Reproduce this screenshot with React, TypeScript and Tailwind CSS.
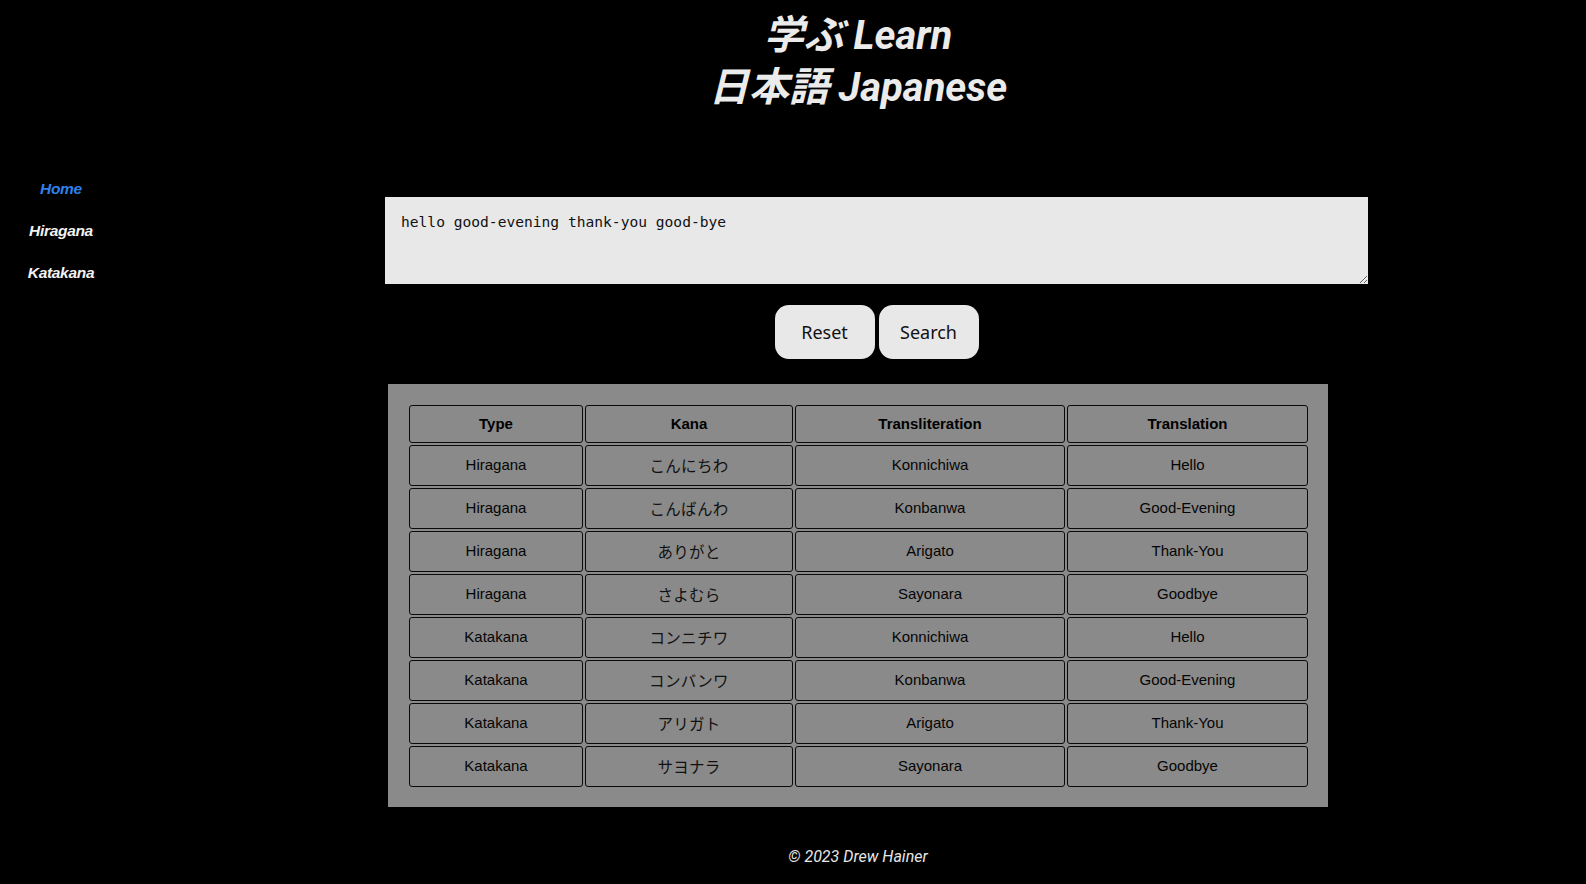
import React from 'react'

const ROWS = [
  { type: 'Hiragana', kana: 'こんにちわ', translit: 'Konnichiwa', translation: 'Hello' },
  { type: 'Hiragana', kana: 'こんばんわ', translit: 'Konbanwa', translation: 'Good-Evening' },
  { type: 'Hiragana', kana: 'ありがと', translit: 'Arigato', translation: 'Thank-You' },
  { type: 'Hiragana', kana: 'さよむら', translit: 'Sayonara', translation: 'Goodbye' },
  { type: 'Katakana', kana: 'コンニチワ', translit: 'Konnichiwa', translation: 'Hello' },
  { type: 'Katakana', kana: 'コンバンワ', translit: 'Konbanwa', translation: 'Good-Evening' },
  { type: 'Katakana', kana: 'アリガト', translit: 'Arigato', translation: 'Thank-You' },
  { type: 'Katakana', kana: 'サヨナラ', translit: 'Sayonara', translation: 'Goodbye' },
]

const NAV = ['Home', 'Hiragana', 'Katakana']

function Sidebar() {
  return (
    <aside className="w-[122px] shrink-0 pt-[168px]">
      <nav className="flex flex-col">
        {NAV.map((item, i) => (
          <a
            key={item}
            href="#"
            className={
              'flex h-[42px] items-center justify-center text-[15.5px] font-bold italic tracking-[-0.02em] ' +
              (i === 0 ? 'text-[#2f80ed]' : 'text-[#f2f2f2]')
            }
            style={{ fontFamily: '"Liberation Sans", Arial, sans-serif' }}
          >
            {item}
          </a>
        ))}
      </nav>
    </aside>
  )
}

function SearchForm() {
  return (
    <div className="flex w-full flex-col items-center pl-[37px]">
      <textarea
        className="h-[87px] w-[983px] border-0 bg-[#e8e8e8] px-[16px] pt-[16px] text-[14.6px] leading-[18px] text-[#111] outline-none"
        style={{ fontFamily: '"DejaVu Sans Mono", monospace' }}
        defaultValue="hello good-evening thank-you good-bye"
      />
      <div className="mt-[21px] flex gap-[4px]">
        {['Reset', 'Search'].map((label) => (
          <button
            key={label}
            className="h-[54px] w-[100px] rounded-[14px] bg-[#e8e8e8] text-[18px] text-[#111]"
            style={{ fontFamily: '"Noto Sans", sans-serif' }}
          >
            {label}
          </button>
        ))}
      </div>
    </div>
  )
}

function KanaTable() {
  const cell = 'rounded-[3px] border border-[#0a0a0a] p-0 text-center align-middle'
  return (
    <div className="mt-[25px] w-[940px] bg-[#8a8a8a] px-[19px] pt-[19px] pb-[18px]">
      <table
        className="w-[902px] table-fixed border-separate border-spacing-[2px]"
        style={{ fontFamily: '"Liberation Sans", Arial, sans-serif' }}
      >
        <thead>
          <tr className="h-[38px] text-[15px] font-bold text-black">
            <th className={cell + ' w-[174px]'}>Type</th>
            <th className={cell + ' w-[208px]'}>Kana</th>
            <th className={cell + ' w-[270px]'}>Transliteration</th>
            <th className={cell + ' w-[241px]'}>Translation</th>
          </tr>
        </thead>
        <tbody className="text-[15px] text-[#050505]">
          {ROWS.map((r, i) => (
            <tr key={i} className="h-[41px]">
              <td className={cell}>{r.type}</td>
              <td
                className={cell + ' text-[15.5px] tracking-[0.02em] text-[#111]'}
                style={{ fontFamily: '"Noto Sans CJK JP", sans-serif' }}
              >
                {r.kana}
              </td>
              <td className={cell}>{r.translit}</td>
              <td className={cell}>{r.translation}</td>
            </tr>
          ))}
        </tbody>
      </table>
    </div>
  )
}

export default function App() {
  return (
    <div className="flex min-h-[884px] w-full bg-black">
      <Sidebar />
      <main className="flex flex-1 flex-col items-center pl-[8px]">
        <h1
          className="mt-[10px] text-center text-[40px] font-bold italic leading-[52px] text-[#ebebeb]"
          style={{ fontFamily: 'Roboto, "Noto Sans CJK JP", sans-serif' }}
        >
          学ぶ Learn
          <br />
          日本語 Japanese
        </h1>
        <div className="mt-[83px] w-full">
          <SearchForm />
        </div>
        <KanaTable />
        <footer
          className="mt-[40px] text-[16px] italic leading-[20px] text-[#e6e6e6]"
          style={{ fontFamily: 'Roboto, sans-serif' }}
        >
          © 2023 Drew Hainer
        </footer>
      </main>
    </div>
  )
}
